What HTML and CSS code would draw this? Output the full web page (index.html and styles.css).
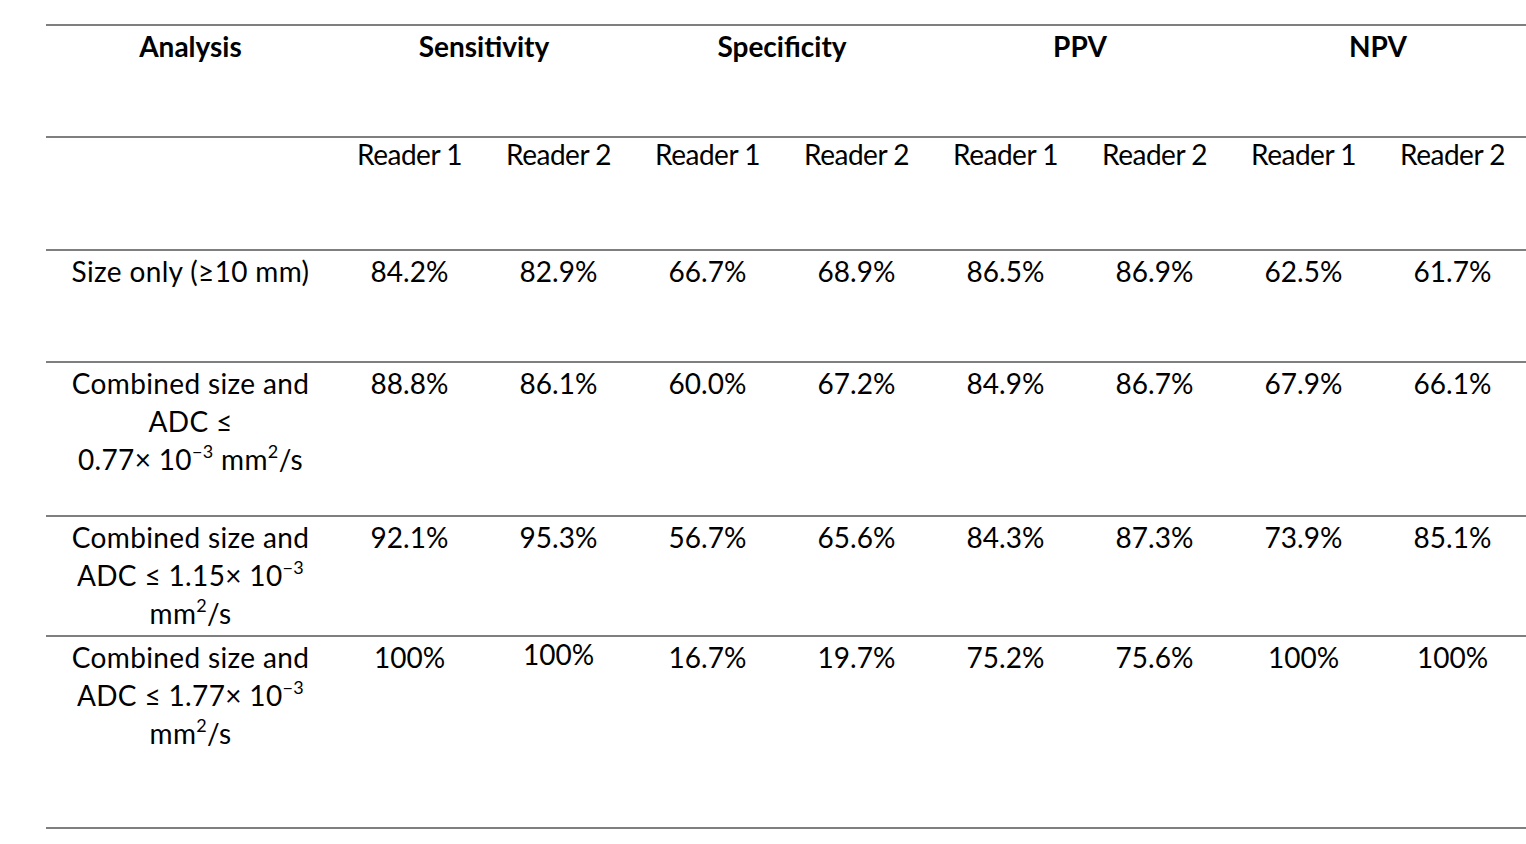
FILE: index.html
```html
<!DOCTYPE html>
<html lang="en">
<head>
<meta charset="utf-8">
<title>Diagnostic performance</title>
<link rel="stylesheet" href="styles.css">
</head>
<body>
<div class="table">
  <div class="row row-head">
    <div class="cell head">Analysis</div>
    <div class="cell head span2">Sensitivity</div>
    <div class="cell head span2">Specificity</div>
    <div class="cell head span2">PPV</div>
    <div class="cell head span2">NPV</div>
  </div>
  <div class="row row-sub">
    <div class="cell"></div>
    <div class="cell">Reader 1</div>
    <div class="cell">Reader 2</div>
    <div class="cell">Reader 1</div>
    <div class="cell">Reader 2</div>
    <div class="cell">Reader 1</div>
    <div class="cell">Reader 2</div>
    <div class="cell">Reader 1</div>
    <div class="cell">Reader 2</div>
  </div>
  <div class="row row-a">
    <div class="cell label">Size only (≥10 mm)</div>
    <div class="cell">84.2%</div>
    <div class="cell">82.9%</div>
    <div class="cell">66.7%</div>
    <div class="cell">68.9%</div>
    <div class="cell">86.5%</div>
    <div class="cell">86.9%</div>
    <div class="cell">62.5%</div>
    <div class="cell">61.7%</div>
  </div>
  <div class="row row-b">
    <div class="cell label">Combined size and<br>ADC ≤<br>0.77× 10<sup>−3</sup> mm<sup>2</sup>/s</div>
    <div class="cell">88.8%</div>
    <div class="cell">86.1%</div>
    <div class="cell">60.0%</div>
    <div class="cell">67.2%</div>
    <div class="cell">84.9%</div>
    <div class="cell">86.7%</div>
    <div class="cell">67.9%</div>
    <div class="cell">66.1%</div>
  </div>
  <div class="row row-c">
    <div class="cell label">Combined size and<br>ADC ≤ 1.15× 10<sup>−3</sup><br>mm<sup>2</sup>/s</div>
    <div class="cell">92.1%</div>
    <div class="cell">95.3%</div>
    <div class="cell">56.7%</div>
    <div class="cell">65.6%</div>
    <div class="cell">84.3%</div>
    <div class="cell">87.3%</div>
    <div class="cell">73.9%</div>
    <div class="cell">85.1%</div>
  </div>
  <div class="row row-d">
    <div class="cell label">Combined size and<br>ADC ≤ 1.77× 10<sup>−3</sup><br>mm<sup>2</sup>/s</div>
    <div class="cell">100%</div>
    <div class="cell raised">100%</div>
    <div class="cell">16.7%</div>
    <div class="cell">19.7%</div>
    <div class="cell">75.2%</div>
    <div class="cell">75.6%</div>
    <div class="cell">100%</div>
    <div class="cell">100%</div>
  </div>
</div>
</body>
</html>
```
FILE: styles.css
```css
html {
  overflow: hidden;
  background: #ffffff;
}
body {
  margin: 0;
  padding: 24px 0 0 46px;
  font-family: Lato, "Open Sans", "Liberation Sans", sans-serif;
  font-size: 28px;
  line-height: 38px;
  color: #000000;
}
.table {
  width: 1481px;
  border-bottom: 2px solid #7f7f7f;
}
.row {
  display: grid;
  grid-template-columns: 289px repeat(8, 149px);
  border-top: 2px solid #7f7f7f;
  box-sizing: border-box;
}
.row-head { height: 112px; }
.row-sub { height: 113px; }
.row-sub .cell {
  padding-top: 0;
  margin-top: -3px;
  letter-spacing: -0.5px;
}
.row-a { height: 112px; }
.row-b { height: 154px; }
.row-c { height: 120px; }
.row-d { height: 192px; }
.cell {
  text-align: center;
  padding-top: 1px;
  white-space: nowrap;
}
.label {
  letter-spacing: 0.35px;
}
.head {
  font-weight: 700;
}
.span2 {
  grid-column: span 2;
}
.raised {
  padding-top: 0;
  margin-top: -2px;
}
sup {
  font-size: 18px;
  line-height: 0;
  vertical-align: 12px;
}
```
